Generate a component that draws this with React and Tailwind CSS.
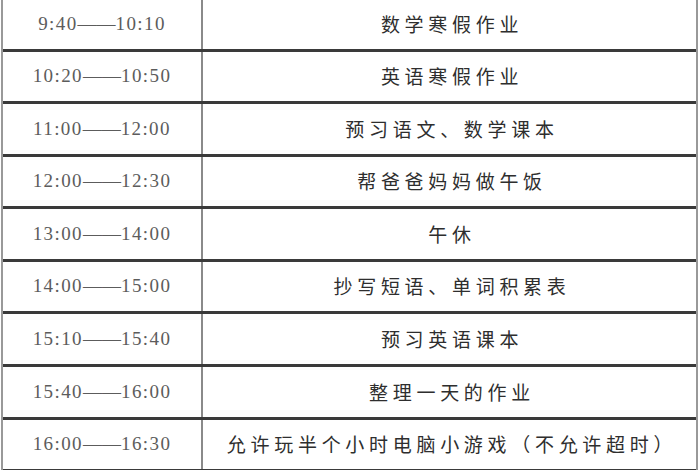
const rows = [
  ["9:40", "10:10", "数学寒假作业"],
  ["10:20", "10:50", "英语寒假作业"],
  ["11:00", "12:00", "预习语文、数学课本"],
  ["12:00", "12:30", "帮爸爸妈妈做午饭"],
  ["13:00", "14:00", "午休"],
  ["14:00", "15:00", "抄写短语、单词积累表"],
  ["15:10", "15:40", "预习英语课本"],
  ["15:40", "16:00", "整理一天的作业"],
  ["16:00", "16:30", "允许玩半个小时电脑小游戏（不允许超时）"],
];

function Row({ from, to, task, first }) {
  return (
    <div
      className={
        "grid grid-cols-[200px_1fr] border-b-[3px] border-[#3a3a3a] " +
        (first ? "h-[51.5px]" : "h-[52.6px]")
      }
    >
      <div className="flex items-center justify-center border-r-2 border-[#8a8a8a] text-[19px] text-[#5c5c5c] tracking-[1.4px] font-['Liberation_Serif',serif]">
        <span>{from}</span>
        <span className="tracking-normal">——</span>
        <span>{to}</span>
      </div>
      <div className="flex items-center justify-center pl-[5px] text-[19px] text-[#2e2e2e] tracking-[4.7px] font-['Noto_Sans_CJK_SC',sans-serif]">
        {task}
      </div>
    </div>
  );
}

export default function App() {
  return (
    <div className="w-[700px] h-[470px] overflow-hidden bg-white">
      <div className="ml-[1px] w-[697px] border-x-2 border-[#999]">
        {rows.map((r, i) => (
          <Row key={i} from={r[0]} to={r[1]} task={r[2]} first={i === 0} />
        ))}
      </div>
    </div>
  );
}
